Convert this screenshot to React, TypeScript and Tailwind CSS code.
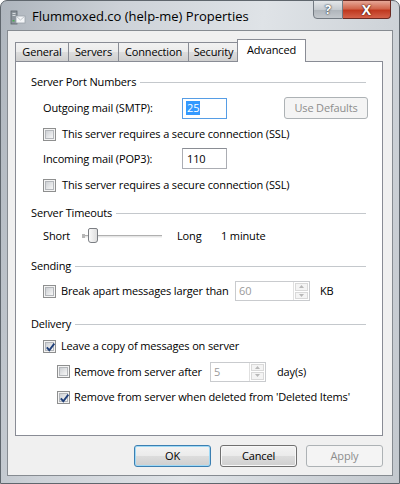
import React from "react";

function Checkbox({ checked }: { checked?: boolean }) {
  return (
    <div className="w-[13px] h-[13px] border border-[#8e8f8f] bg-[#f4f4f4] p-px shrink-0 relative">
      <div className="w-full h-full border border-[#b3b6ba] bg-[linear-gradient(135deg,#cdd0d4,#f7f7f7)]" />
      {checked && (
        <svg className="absolute left-[1px] top-[1px]" width="11" height="11" viewBox="0 0 11 11">
          <path d="M1.8 5.3 L4.3 8.2 L9.3 1.6" fill="none" stroke="#20407a" strokeWidth="1.9" />
        </svg>
      )}
    </div>
  );
}

function Header({ children }: { children: React.ReactNode }) {
  return (
    <div className="flex items-center h-[16px] pr-[16px]">
      <span className="whitespace-nowrap">{children}</span>
      <div className="flex-1 ml-[4px] h-px bg-[#c4c8cc]" />
    </div>
  );
}

function Btn({ label, kind }: { label: string; kind: "default" | "normal" | "disabled" }) {
  const base =
    "h-[22px] rounded-[3px] border flex items-center justify-center shrink-0 ";
  if (kind === "disabled")
    return (
      <div className={base + "w-[77px] border-[#adb2b5] bg-[#f4f4f4] text-[#8d8d8d]"}>{label}</div>
    );
  return (
    <div
      className={
        base +
        "w-[77px] bg-[linear-gradient(to_bottom,#f3f3f3_0%,#ebebeb_48%,#dcdcdc_52%,#cfcfcf_100%)] text-black " +
        (kind === "default" ? "border-[#3c7fb1] shadow-[inset_0_0_0_1px_#9fd9f6]" : "border-[#707070] shadow-[inset_0_0_0_1px_#f8f8f8]")
      }
    >
      {label}
    </div>
  );
}

function Spin({ value, w }: { value: string; w: string }) {
  return (
    <div className={"h-[20px] border border-[#c9cbce] bg-white flex shrink-0 " + w}>
      <div className="flex-1 flex items-center pl-[3px] text-[#9a9a9a]">{value}</div>
      <div className="w-[16px] flex flex-col border-l border-[#e0e0e0] p-px gap-px">
        <div className="flex-1 border border-[#d9d9d9] bg-[#f4f4f4] flex items-center justify-center">
          <svg width="5" height="3" viewBox="0 0 5 3"><path d="M0 3 L2.5 0 L5 3Z" fill="#b8b8b8" /></svg>
        </div>
        <div className="flex-1 border border-[#d9d9d9] bg-[#f4f4f4] flex items-center justify-center">
          <svg width="5" height="3" viewBox="0 0 5 3"><path d="M0 0 L2.5 3 L5 0Z" fill="#b8b8b8" /></svg>
        </div>
      </div>
    </div>
  );
}

export default function App() {
  return (
    <div className="w-[400px] h-[484px] relative overflow-hidden font-['Open_Sans',sans-serif] text-[11px] text-black leading-[16px]">
      <div className="w-full h-full flex flex-col rounded-t-[7px] border border-[#5f666d] bg-[linear-gradient(100deg,#aeb5bd_0%,#cdd2d8_25%,#dfe3e7_55%,#cfd4d9_80%,#c3c8ce_100%)]">
        {/* Title bar */}
        <div className="h-[29px] flex items-start relative shrink-0">
          <div className="mt-[9px] ml-[9px] w-[16px] h-[16px]">
            <svg width="16" height="16" viewBox="0 0 16 16">
              <rect x="1" y="1" width="6" height="13" fill="#8c949c" stroke="#5d646b" strokeWidth="0.8" />
              <rect x="2.5" y="3" width="3" height="1" fill="#d6dadd" />
              <rect x="2.5" y="5" width="3" height="1" fill="#d6dadd" />
              <rect x="2.5" y="10" width="2" height="1.5" fill="#4caf50" />
              <rect x="6" y="6" width="9" height="7" fill="#f4f6f8" stroke="#9aa1a8" strokeWidth="0.8" />
              <path d="M6 6 L10.5 10 L15 6" fill="none" stroke="#b4bac0" strokeWidth="0.8" />
            </svg>
          </div>
          <div className="mt-[6px] ml-[6px] text-[13px] leading-[18px] text-black">
            Flummoxed.co (help-me) Properties
          </div>
          <div className="absolute right-[8px] top-[-1px] flex">
            <div className="w-[30px] h-[19px] rounded-bl-[4px] border border-[#737a82] bg-[linear-gradient(to_bottom,#e4e7ea,#c6cbd0_50%,#aeb4ba_51%,#c3c8cd)] flex items-center justify-center">
              <span className="text-white font-bold text-[13px] leading-[15px] [text-shadow:0_0_2px_#2d3540,0_0_1px_#2d3540]">?</span>
            </div>
            <div className="w-[48px] h-[19px] rounded-br-[4px] border border-l-0 border-[#6b2a22] bg-[linear-gradient(to_bottom,#e6a797,#d1664d_45%,#c0391f_55%,#d4624a)] flex items-center justify-center">
              <span className="text-white font-bold text-[14px] leading-[15px] [text-shadow:0_0_2px_#4a1208,0_0_1px_#4a1208]">X</span>
            </div>
          </div>
        </div>

        {/* Client area */}
        <div className="mx-[6px] mb-[7px] flex-1 border border-[#868b91] bg-[#f0f0f0] flex flex-col tracking-[-0.15px]">
          <div className="pt-[8px] pl-[7px] pr-[9px]">
            {/* tabs */}
            <div className="h-[22px] flex items-end">
              {[
                ["General", "w-[54px]"],
                ["Servers", "w-[51px]"],
                ["Connection", "w-[71px]"],
                ["Security", "w-[51px]"],
              ].map(([t, w], i) => (
                <div
                  key={t}
                  className={
                    "h-[19px] border border-b-0 border-[#898c95] bg-[linear-gradient(to_bottom,#f2f2f2,#ebebeb_50%,#dddddd_51%,#cfcfcf)] flex items-center justify-center text-black " +
                    w +
                    (i > 0 ? " -ml-px" : "")
                  }
                >
                  {t}
                </div>
              ))}
              <div className="h-[23px] w-[69px] -ml-[2px] mb-[-1px] relative z-10 border border-b-0 border-[#898c95] bg-white flex items-start justify-center pt-[2px]">
                Advanced
              </div>
            </div>
            {/* panel */}
            <div className="h-[375px] border border-[#898c95] bg-white pl-[15px] pt-[12px] flex flex-col">
              <Header>Server Port Numbers</Header>
              <div className="mt-[7px] ml-[12px] h-[22px] flex items-center">
                <div className="w-[139px]">Outgoing mail (SMTP):</div>
                <div className="w-[45px] h-[21px] border border-[#569de5] bg-white flex items-center pl-[3px]">
                  <span className="bg-[#3399ff] text-white leading-[14px] px-px">25</span>
                </div>
                <div className="ml-[57px] w-[84px] h-[22px] rounded-[3px] border border-[#adb2b5] bg-[#f4f4f4] text-[#8d8d8d] flex items-center justify-center">
                  Use Defaults
                </div>
              </div>
              <div className="mt-[7px] ml-[12px] h-[16px] flex items-center gap-[6px]">
                <Checkbox />
                <span>This server requires a secure connection (SSL)</span>
              </div>
              <div className="mt-[6px] ml-[12px] h-[21px] flex items-center">
                <div className="w-[139px]">Incoming mail (POP3):</div>
                <div className="w-[45px] h-[21px] border border-[#abadb3] border-t-[#8a8d94] bg-white flex items-center pl-[4px]">
                  110
                </div>
              </div>
              <div className="mt-[8px] ml-[12px] h-[16px] flex items-center gap-[6px]">
                <Checkbox />
                <span>This server requires a secure connection (SSL)</span>
              </div>

              <div className="mt-[12px]">
                <Header>Server Timeouts</Header>
              </div>
              <div className="mt-[6px] ml-[12px] h-[18px] flex items-center">
                <div className="w-[39px]">Short</div>
                <div className="w-[80px] h-[18px] relative">
                  <div className="absolute left-0 right-0 top-[8px] h-[3px] border-t border-[#b0b0b0] border-b border-b-[#f4f4f4] bg-[#e6e6e6]" />
                  <div className="absolute left-0 top-[7px] w-[3px] h-[4px] bg-[#b7b7b7]" />
                  <div className="absolute left-[6px] top-[1px] w-[10px] h-[15px] rounded-b-[3px] rounded-t-[2px] border border-[#7b7e83] bg-[linear-gradient(to_right,#fafafa,#dedede)]" />
                </div>
                <div className="ml-[15px] w-[44px]">Long</div>
                <div>1 minute</div>
              </div>

              <div className="mt-[13px]">
                <Header>Sending</Header>
              </div>
              <div className="mt-[7px] ml-[12px] h-[20px] flex items-center">
                <Checkbox />
                <span className="ml-[5px] w-[174px] whitespace-nowrap">Break apart messages larger than</span>
                <Spin value="60" w="w-[75px]" />
                <span className="ml-[10px]">KB</span>
              </div>

              <div className="mt-[15px]">
                <Header>Delivery</Header>
              </div>
              <div className="mt-[6px] ml-[12px] h-[16px] flex items-center gap-[5px]">
                <Checkbox checked />
                <span>Leave a copy of messages on server</span>
              </div>
              <div className="mt-[7px] ml-[26px] h-[21px] flex items-center">
                <Checkbox />
                <span className="ml-[4px] w-[136px] whitespace-nowrap">Remove from server after</span>
                <Spin value="5" w="w-[56px]" />
                <span className="ml-[11px]">day(s)</span>
              </div>
              <div className="mt-[7px] ml-[26px] h-[16px] flex items-center gap-[4px]">
                <Checkbox checked />
                <span>Remove from server when deleted from 'Deleted Items'</span>
              </div>
            </div>
            {/* buttons */}
            <div className="mt-[9px] flex justify-end gap-[9px]">
              <Btn label="OK" kind="default" />
              <Btn label="Cancel" kind="normal" />
              <Btn label="Apply" kind="disabled" />
            </div>
          </div>
        </div>
      </div>
    </div>
  );
}
